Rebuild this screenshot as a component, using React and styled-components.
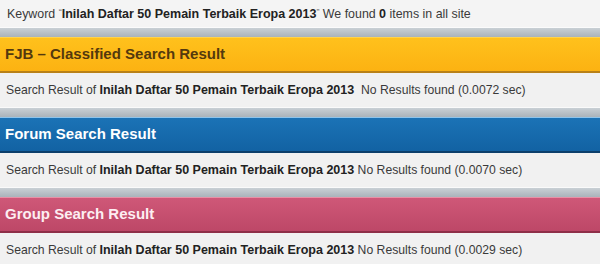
import React from "react";
import styled, { createGlobalStyle } from "styled-components";

const GlobalStyle = createGlobalStyle`
  html, body {
    margin: 0;
    padding: 0;
    background: #f2f2f2;
    font-family: "Liberation Sans", Arial, sans-serif;
  }
`;

const themes = {
  yellow: {
    top: "#ffd34a",
    from: "#ffc11c",
    to: "#fcb212",
    border: "#b98118",
    text: "#54390e",
  },
  blue: {
    top: "#8fc4ea",
    from: "#1b73b6",
    to: "#1262a3",
    border: "#0c3f6b",
    text: "#ffffff",
  },
  pink: {
    top: "#e891a6",
    from: "#cf5878",
    to: "#bd4767",
    border: "#8e2f48",
    text: "#fdeef2",
  },
};

const sections = [
  { title: "FJB \u2013 Classified Search Result", theme: "yellow", gap: "  ", time: "0.0072" },
  { title: "Forum Search Result", theme: "blue", gap: " ", time: "0.0070" },
  { title: "Group Search Result", theme: "pink", gap: " ", time: "0.0029" },
];

const KEYWORD = "Inilah Daftar 50 Pemain Terbaik Eropa 2013";

function App() {
  return (
    <>
      <GlobalStyle />
      <Page>
        <KeywordLine>
          {"Keyword "}
          <Quote>{"\u201C"}</Quote>
          <b>{KEYWORD}</b>
          <Quote>{"\u201D"}</Quote>
          {" We found "}
          <b>0</b>
          {" items in all site"}
        </KeywordLine>
        {sections.map((s) => (
          <Section key={s.title}>
            <Divider />
            <Header $c={themes[s.theme]}>{s.title}</Header>
            <ResultRow>
              {"Search Result of "}
              <b>{KEYWORD}</b>
              {s.gap + "No Results found (" + s.time + " sec)"}
            </ResultRow>
          </Section>
        ))}
      </Page>
    </>
  );
}

const Page = styled.div`
  width: 600px;
  display: flex;
  flex-direction: column;
  color: #3a3a3a;
  font-size: 12px;

  b {
    color: #222;
    font-weight: bold;
    font-size: 12.5px;
  }
`;

const KeywordLine = styled.div`
  height: 28px;
  line-height: 25px;
  padding: 0 7px;
  font-size: 12.4px;
  white-space: pre;
  background: #f4f4f4;
  border-bottom: 1px solid #fbfbfb;
  box-sizing: border-box;
`;

const Quote = styled.span`
  font-size: 9px;
  color: #777;
  vertical-align: 3px;
`;

const Section = styled.div`
  display: flex;
  flex-direction: column;
`;

const Divider = styled.div`
  height: 9px;
  background: linear-gradient(#c9d0d5, #aab3ba);
`;

const Header = styled.div`
  height: 36px;
  box-sizing: border-box;
  padding: 0 5px;
  line-height: 32px;
  font-size: 15px;
  font-weight: bold;
  color: ${(p) => p.$c.text};
  background: linear-gradient(${(p) => p.$c.from}, ${(p) => p.$c.to});
  border-top: 1px solid ${(p) => p.$c.top};
  border-bottom: 2px solid ${(p) => p.$c.border};
`;

const ResultRow = styled.div`
  height: 35px;
  box-sizing: border-box;
  padding: 0 6px;
  line-height: 34px;
  font-size: 12.2px;
  white-space: pre;
  background: #f1f1f1;
  border-bottom: 1px solid #fafafa;
`;

export default App;
